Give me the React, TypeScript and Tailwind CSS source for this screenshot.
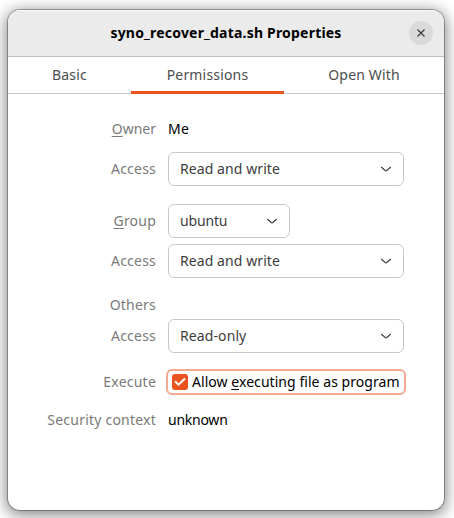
import type { ReactNode } from "react";

function Chevron() {
  return (
    <svg className="shrink-0" width="12" height="8" viewBox="0 0 12 8" fill="none" stroke="#3d3d3d" strokeWidth="1.15">
      <path d="M1.2 2 5.2 5.5Q6 6.1 6.8 5.5L10.8 2" />
    </svg>
  );
}

function Row({ label, className, children }: { label: ReactNode; className: string; children?: ReactNode }) {
  return (
    <div className={`flex items-center gap-3 ${className}`}>
      <div className="flex w-[148px] shrink-0 justify-end tracking-[0.22px] whitespace-nowrap text-[#7a7a7a]">{label}</div>
      {children}
    </div>
  );
}

function Select({ width, children }: { width: string; children: ReactNode }) {
  return (
    <button
      className={`flex h-[34px] items-center justify-between rounded-[6px] border border-[#c7c7c7] bg-white pr-[11px] pl-[11px] text-[#3d3d3d] ${width}`}
    >
      {children}
      <Chevron />
    </button>
  );
}

function Mnemonic({ children }: { children: ReactNode }) {
  return <span className="underline decoration-1 underline-offset-2">{children}</span>;
}

export default function App() {
  return (
    <div className="h-[518px] w-[454px] overflow-hidden bg-white pt-[10px] pl-2 font-['Noto_Sans',sans-serif] text-[14px] leading-5">
      <div className="h-[500px] w-[436px] overflow-hidden rounded-[12px] bg-white shadow-[0_0_0_1px_rgba(0,0,0,0.3),0_3px_15px_2px_rgba(0,0,0,0.48)]">
        <header className="flex h-[47px] items-center border-b border-[#bebebe] bg-[#ebebeb] pr-[11px] pl-[35px] shadow-[inset_0_1px_0_#fafafa]">
          <h1 className="flex-1 text-center font-bold whitespace-nowrap text-black">
            <span className="tracking-[0.2px]">syno_recover_data.sh Properties</span>
          </h1>
          <button className="flex size-6 items-center justify-center rounded-full bg-[#dadada]">
            <svg width="10" height="10" viewBox="0 0 10 10" stroke="#3d3d3d" strokeWidth="1.3">
              <path d="m1.5 1.5 7 7M8.5 1.5l-7 7" />
            </svg>
          </button>
        </header>
        <nav className="flex h-[37px] border-b border-[#c7c7c7] text-[#4d4d4d]">
          <div className="flex w-[123px] items-center justify-center tracking-[0.2px]">Basic</div>
          <div className="-mb-px flex h-[37px] w-[153px] items-center justify-center border-b-3 border-[#e95420] pt-[2px]">
            <span className="tracking-[0.18px]">Permissions</span>
          </div>
          <div className="flex w-[160px] items-center justify-center tracking-[0.15px]">Open With</div>
        </nav>
        <main className="pt-[25px]">
          <Row className="h-5" label={<span className="tracking-normal"><Mnemonic>O</Mnemonic>wner</span>}>
            <span className="tracking-[0.2px]">Me</span>
          </Row>
          <Row className="mt-[13px] h-[34px]" label={<span>Access</span>}>
            <Select width="w-[236px]"><span className="tracking-[0.08px]">Read and write</span></Select>
          </Row>
          <Row className="mt-[18px] h-[34px]" label={<span><Mnemonic>G</Mnemonic>roup</span>}>
            <Select width="w-[122px]"><span className="tracking-[-0.15px]">ubuntu</span></Select>
          </Row>
          <Row className="mt-[6px] h-[34px]" label={<span>Access</span>}>
            <Select width="w-[236px]"><span className="tracking-[0.08px]">Read and write</span></Select>
          </Row>
          <Row className="mt-[17px] h-5" label={<span>Others</span>} />
          <Row className="mt-1 h-[34px]" label={<span>Access</span>}>
            <Select width="w-[236px]"><span className="tracking-[0.1px]">Read-only</span></Select>
          </Row>
          <Row className="mt-4 h-[26px]" label={<span>Execute</span>}>
            <label className="-ml-[14px] flex h-[26px] w-[240px] translate-x-3 items-center gap-1 rounded-[6px] border-2 border-[#f4aa90] pl-1 whitespace-nowrap">
              <span className="flex size-4 shrink-0 items-center justify-center rounded-[3px] bg-[#e95420]">
                <svg width="12" height="10" viewBox="0 0 12 10" fill="none" stroke="#fff" strokeWidth="2">
                  <path d="m1 4.3 3.5 3.4L11 1.5" />
                </svg>
              </span>
              <span className="tracking-[0.05px]">Allow <Mnemonic>e</Mnemonic>xecuting file as program</span>
            </label>
          </Row>
          <Row className="mt-[15px] h-5" label={<span>Security context</span>}>
            <span className="tracking-[-0.25px]">unknown</span>
          </Row>
        </main>
      </div>
    </div>
  );
}
